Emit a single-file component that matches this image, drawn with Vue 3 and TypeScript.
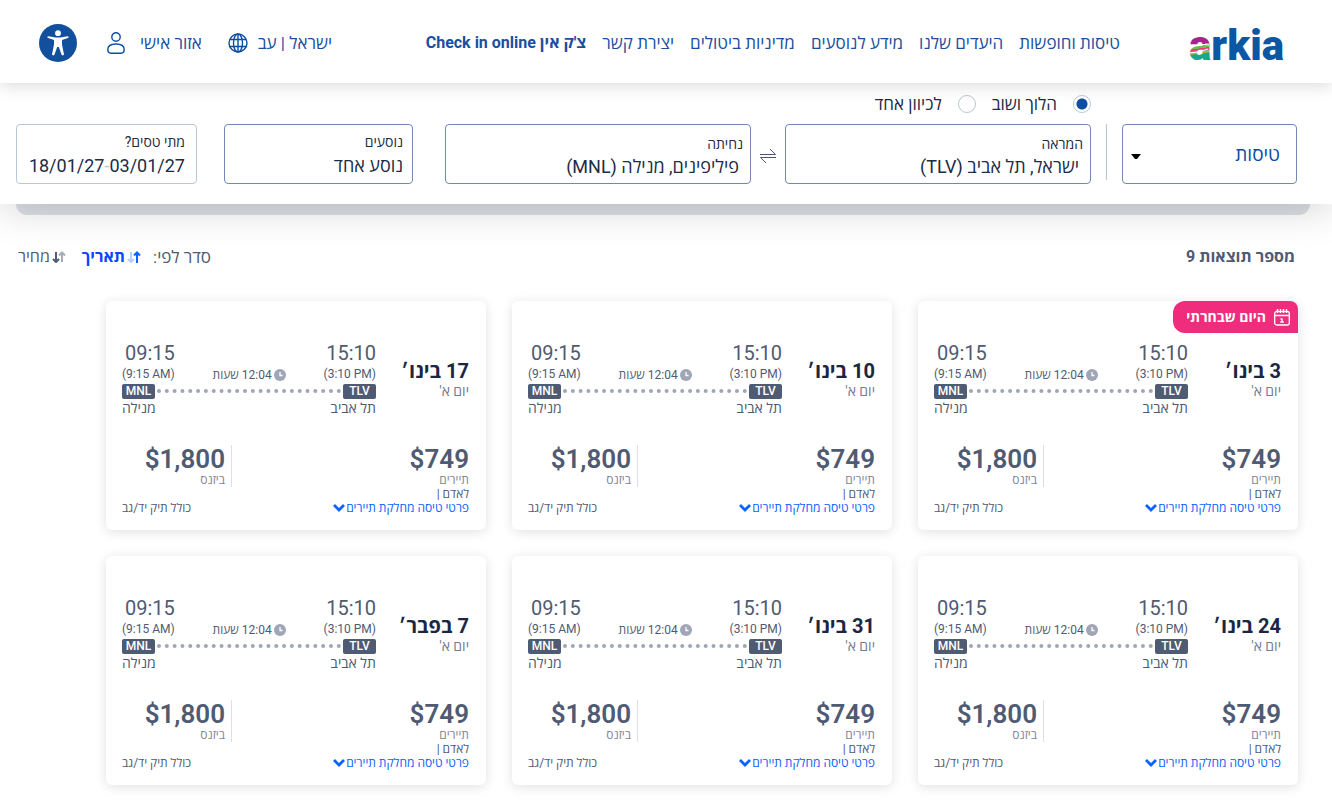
<script setup lang="ts">
import { ref } from 'vue'

interface Flight {
  id: number
  date: string
  chosen: boolean
}

const navItems: string[] = ['טיסות וחופשות', 'היעדים שלנו', 'מידע לנוסעים', 'מדיניות ביטולים', 'יצירת קשר']

const flights: Flight[] = [
  { id: 1, date: '3 בינו׳', chosen: true },
  { id: 2, date: '10 בינו׳', chosen: false },
  { id: 3, date: '17 בינו׳', chosen: false },
  { id: 4, date: '24 בינו׳', chosen: false },
  { id: 5, date: '31 בינו׳', chosen: false },
  { id: 6, date: '7 בפבר׳', chosen: false },
]

const trip = ref<'round' | 'oneway'>('round')
const origin = ref('ישראל, תל אביב (TLV)')
const destination = ref('פיליפינים, מנילה (MNL)')

function swap(): void {
  const previous = origin.value
  origin.value = destination.value
  destination.value = previous
}
</script>

<template>
  <div class="page" dir="rtl" lang="he">
    <header class="header">
      <a href="#" class="logo" aria-label="arkia">
        <svg width="96" height="60" viewBox="0 -7 96 60" direction="ltr">
          <defs>
            <linearGradient id="stripes" gradientUnits="userSpaceOnUse" x1="10" y1="16" x2="13" y2="39">
              <stop offset="0" stop-color="#f26a4b" />
              <stop offset=".1" stop-color="#f26a4b" />
              <stop offset=".1" stop-color="#a3268f" />
              <stop offset=".4" stop-color="#a3268f" />
              <stop offset=".4" stop-color="#6cbe45" />
              <stop offset=".58" stop-color="#6cbe45" />
              <stop offset=".58" stop-color="#ee3d7c" />
              <stop offset=".66" stop-color="#ee3d7c" />
              <stop offset=".68" stop-color="#35aee2" />
              <stop offset=".76" stop-color="#f5a623" />
              <stop offset=".84" stop-color="#14a88f" />
              <stop offset="1" stop-color="#14a88f" />
            </linearGradient>
          </defs>
          <text class="logo-text" x="1" y="41" fill="#0b57a4"><tspan fill="url(#stripes)">a</tspan>rkia</text>
          <path d="M1 29q10 -5 20 -3M0 34q10 0 20 -4" fill="none" stroke="#fff" />
        </svg>
      </a>
      <nav class="nav">
        <a v-for="item in navItems" :key="item" href="#">{{ item }}</a>
        <a href="#" class="checkin">צ'ק אין Check in online</a>
      </nav>
      <div class="tools">
        <a href="#" class="tool language">
          <span>ישראל | עב</span>
          <svg width="20" height="20" viewBox="0 0 20 20" fill="none" stroke="#0b4ea2" stroke-width="1.4">
            <circle cx="10" cy="10" r="9" />
            <ellipse cx="10" cy="10" rx="4.5" ry="9" />
            <path d="M10 1v18M2 6.5h16M2 13.5h16" />
          </svg>
        </a>
        <a href="#" class="tool account">
          <span>אזור אישי</span>
          <svg width="18" height="22" viewBox="0 0 18 22" fill="none" stroke="#0b4ea2" stroke-width="1.4">
            <circle cx="9" cy="5" r="4.2" />
            <path d="M9 12c-5 0-8.200 2.200-8.200 5.500 0 2.500 1.200 3.700 3.200 3.700h10c2 0 3.200-1.200 3.200-3.700C17.200 14.200 14 12 9 12z" />
          </svg>
        </a>
        <button type="button" class="access" aria-label="נגישות">
          <svg width="38" height="38" viewBox="0 0 38 38">
            <circle cx="19" cy="19" r="19" fill="#124f9c" />
            <circle cx="19" cy="9.200" r="2.900" fill="#fff" />
            <path d="M9.500 12.200l7 1.200h5l7-1.200c1.200-.1 1.500 1.500.4 1.900L23 16v4.500l1.900 9.500c.2 1.700-1.900 2-2.400.5L19.800 23h-1.600l-2.700 7.500c-.6 1.500-2.600 1.200-2.400-.5L15 20.500V16l-5.900-1.900c-1.100-.4-.800-2 .4-1.900z" fill="#fff" />
          </svg>
        </button>
      </div>
    </header>

    <form class="search" @submit.prevent>
      <div class="box product">
        <select aria-label="סוג מוצר">
          <option>טיסות</option>
        </select>
        <svg width="10" height="6" viewBox="0 0 10 6"><path d="M0 0h10L6 5H4z" fill="#000" /></svg>
      </div>
      <div class="divider"></div>
      <div class="trip">
        <div class="trip-kind">
          <label><input v-model="trip" type="radio" name="trip" value="round" />הלוך ושוב</label>
          <label><input v-model="trip" type="radio" name="trip" value="oneway" />לכיוון אחד</label>
        </div>
        <div class="places">
          <div class="box place">
            <label for="origin">המראה</label>
            <input id="origin" v-model="origin" type="text" />
          </div>
          <button type="button" class="swap" aria-label="החלפה" @click="swap">
            <svg width="16" height="16" viewBox="0 0 16 16" fill="none" stroke="#4c566e" stroke-width="1">
              <path d="M0 6.500h15.500L10 1M16 9.500H.5L6 15" />
            </svg>
          </button>
          <div class="box place">
            <label for="destination">נחיתה</label>
            <input id="destination" v-model="destination" type="text" />
          </div>
        </div>
      </div>
      <button type="button" class="box picker passengers">
        <span class="caption">נוסעים</span>
        <span class="value">נוסע אחד</span>
      </button>
      <button type="button" class="box picker dates">
        <span class="caption">מתי טסים?</span>
        <span class="value" dir="ltr">18/01/27<i>-</i>03/01/27</span>
      </button>
    </form>
    <div class="ledge"></div>

    <main>
      <div class="toolbar">
        <h1>מספר תוצאות 9</h1>
        <div class="sort">
          <span>סדר לפי:</span>
          <button type="button" class="active">
            <svg width="14" height="12" viewBox="0 0 14 12" fill="none" stroke-width="2">
              <path d="M10 12V2M7 4.500L10 1.500L13 4.500" stroke="#0a62ff" />
              <path d="M4 1v9M1 8L4 11L7 8" stroke="#b5d0ff" />
            </svg>
            תאריך
          </button>
          <button type="button">
            <svg width="14" height="12" viewBox="0 0 14 12" fill="none" stroke-width="2">
              <path d="M10 11V2M7 4.500L10 1.500L13 4.500" stroke="#a5abb9" />
              <path d="M4 1v9M1 8L4 11L7 8" stroke="#4f5a73" />
            </svg>
            מחיר
          </button>
        </div>
      </div>

      <section class="cards">
        <article v-for="flight in flights" :key="flight.id" class="card">
          <div v-if="flight.chosen" class="badge">
            <svg width="16" height="17" viewBox="0 0 16 17" fill="none" stroke="#fff" stroke-width="1.300">
              <rect x=".7" y="2.500" width="14.600" height="13.500" rx="2" />
              <path d="M1 6.500h14M3.500 0v4M6.500 0v4M9.500 0v4M12.500 0v4M6.500 10H8v3M6.200 13h3.600" />
            </svg>
            <span>היום שבחרתי</span>
          </div>
          <div class="flight">
            <div class="when">
              <h2>{{ flight.date }}</h2>
              <p>יום א'</p>
            </div>
            <div class="route">
              <div class="times">
                <div class="time"><strong>15:10</strong><small dir="ltr">(3:10 PM)</small></div>
                <div class="duration">
                  <svg width="12" height="12" viewBox="0 0 12 12">
                    <circle cx="6" cy="6" r="6" fill="#a0a6b6" />
                    <path d="M6 3v3.500h2.500" fill="none" stroke="#fff" stroke-width="1.300" />
                  </svg>
                  <span>12:04 שעות</span>
                </div>
                <div class="time"><strong>09:15</strong><small dir="ltr">(9:15 AM)</small></div>
              </div>
              <div class="line"><b>TLV</b><i></i><b>MNL</b></div>
              <div class="cities"><span>תל אביב</span><span>מנילה</span></div>
            </div>
          </div>
          <div class="prices">
            <div class="price"><strong dir="ltr">$749</strong><span>תיירים</span></div>
            <div class="price business"><strong dir="ltr">$1,800</strong><span>ביזנס</span></div>
          </div>
          <footer class="details">
            <div class="fare">
              <span>לאדם |</span>
              <a href="#">פרטי טיסה מחלקת תיירים<svg width="12" height="8" viewBox="0 0 12 8"><path d="M1 1L6 6L11 1" fill="none" stroke="#0a62ff" stroke-width="2.800" /></svg></a>
            </div>
            <span>כולל תיק יד/גב</span>
          </footer>
        </article>
      </section>
    </main>
  </div>
</template>

<style>
body {
  background: #fff;
}
</style>

<style scoped>
.page {
  font-family: Roboto, "Open Sans", "Noto Sans", sans-serif;
  font-size: 16px;
  line-height: 20px;
  color: #4f5a73;
}
.page * {
  box-sizing: border-box;
}
button,
input,
select {
  font: inherit;
  color: inherit;
  margin: 0;
  padding: 0;
  border: 0;
  background: none;
}
a {
  color: inherit;
  text-decoration: none;
}
svg {
  flex: none;
  display: block;
}
.header {
  position: relative;
  z-index: 3;
  display: flex;
  align-items: center;
  height: 83px;
  padding: 0 48px 0 39px;
  background: #fff;
  box-shadow: 0 2px 16px rgba(0, 0, 0, 0.16);
  color: #1a4f9f;
}
.logo-text {
  font-family: Roboto, sans-serif;
  font-size: 42px;
  line-height: 48px;
  font-weight: 900;
}
.nav {
  display: flex;
  gap: 16px;
  margin-right: 68px;
  white-space: nowrap;
  padding-top: 3px;
  font-size: 17px;
}
.checkin {
  font-size: 16px;
  font-weight: 700;
}
.tools {
  display: flex;
  align-items: center;
  margin-right: auto;
  padding-top: 3px;
  white-space: nowrap;
  font-size: 17px;
}
.tool {
  display: flex;
  align-items: center;
}
.language {
  gap: 10px;
}
.account {
  gap: 15px;
  margin: 0 26px 0 30px;
}
.search {
  position: relative;
  z-index: 2;
  display: flex;
  align-items: flex-end;
  padding: 12px 35px 20px 16px;
  background: #fff;
  box-shadow: 0 4px 40px rgba(0, 0, 0, 0.18);
  color: #202b45;
}
.box {
  height: 60px;
  border: 1px solid #7289b5;
  border-radius: 4px;
}
.product {
  display: flex;
  align-items: center;
  width: 175px;
  padding: 2px 16px 0 8px;
}
.product svg {
  margin-right: -10px;
  pointer-events: none;
  margin-top: 3px;
}
.product select {
  flex: 1;
  height: 56px;
  appearance: none;
  font-size: 19px;
  color: #0b4ea2;
  font-weight: 500;
}
.divider {
  width: 1px;
  height: 56px;
  margin: 0 15px 4px;
  background: #b8c4d2;
}
.trip {
  flex: 1;
  min-width: 0;
}
.trip-kind {
  display: flex;
  gap: 16px;
  height: 18px;
  margin-bottom: 11px;
  font-size: 17px;
}
.trip-kind label {
  display: flex;
  align-items: center;
  gap: 16px;
}
.trip-kind input {
  appearance: none;
  width: 18px;
  height: 18px;
  border: 1px solid #b8c8d4;
  border-radius: 50%;
}
.trip-kind input:checked {
  background: radial-gradient(circle, #0b4ea2 5px, #fff 6px);
}
.places {
  display: flex;
}
.place {
  flex: 1;
  min-width: 0;
  padding: 9px 7px 0;
}
.place label {
  display: block;
  font-size: 14px;
}
.place input {
  display: block;
  width: 100%;
  height: 24px;
  padding: 0 4px;
  font-size: 18px;
}
.swap {
  width: 34px;
  padding-top: 3px;
  display: grid;
  place-items: center;
}
.picker {
  display: flex;
  flex-direction: column;
  align-items: flex-start;
  padding: 7px 9px 0;
}
.passengers {
  width: 189px;
  margin: 0 32px 0 27px;
}
.dates {
  width: 181px;
  padding: 7px 11px 0;
  border-color: #b8c8d4;
}
.caption {
  font-size: 14px;
}
.value {
  font-size: 18px;
  line-height: 28px;
}
.value i {
  font-style: normal;
  color: #b8c4d2;
}
.ledge {
  height: 11px;
  margin: 0 22px 0 16px;
  border-radius: 0 0 14px 14px;
  background: #dcdfe5;
}
.toolbar {
  display: flex;
  justify-content: space-between;
  align-items: center;
  padding: 32px 37px 34px 18px;
}
.toolbar h1 {
  margin: 0;
  font-size: 16px;
  font-weight: 700;
}
.sort {
  display: flex;
  gap: 12px;
}
.sort span {
  font-size: 17px;
}
.sort button {
  display: flex;
  align-items: center;
  gap: 2px;
}
.sort .active {
  color: #0a45ff;
  font-weight: 700;
}
.sort .active + button {
  margin-right: 4px;
}
.cards {
  display: grid;
  grid-template-columns: repeat(3, minmax(0, 1fr));
  gap: 26px;
  padding: 0 34px 16px 106px;
}
.card {
  position: relative;
  padding: 40px 17px 15px 16px;
  border-radius: 6px;
  background: #fff;
  box-shadow: 0 2px 12px rgba(0, 0, 0, 0.12);
}
.badge {
  position: absolute;
  top: 0;
  right: 0;
  display: flex;
  align-items: center;
  gap: 8px;
  width: 125px;
  height: 32px;
  padding: 0 8px;
  border-radius: 12px 8px 0 12px;
  background: #f02d7d;
  color: #fff;
  font-size: 14px;
  font-weight: 700;
  white-space: nowrap;
}
.flight {
  display: flex;
  justify-content: space-between;
  align-items: center;
}
.when h2 {
  margin: 0;
  font-size: 20px;
  line-height: 24px;
  color: #1b2742;
}
.when p {
  margin: 0;
  font-size: 14px;
  line-height: 16px;
  color: #727b90;
}
.route {
  width: 254px;
}
.times,
.cities {
  display: flex;
  justify-content: space-between;
}
.time {
  display: flex;
  flex-direction: column;
}
.time strong {
  font-size: 20px;
  line-height: 24px;
  font-weight: 400;
}
.time small {
  font-size: 12px;
  line-height: 18px;
  text-align: right;
}
.duration {
  display: flex;
  align-items: center;
  align-self: flex-end;
  gap: 2px;
  font-size: 12px;
  line-height: 16px;
}
.line {
  display: flex;
  align-items: center;
  margin-top: 1px;
}
.line b {
  width: 33px;
  border-radius: 2px;
  background: #4f5a73;
  color: #fff;
  font-size: 12px;
  line-height: 15px;
  font-weight: 500;
  text-align: center;
}
.line i {
  flex: 1;
  margin: 0 2px 1px;
  border-top: 4px dotted #a0a6b6;
}
.cities {
  font-size: 14px;
  line-height: 18px;
}
.prices {
  display: flex;
  justify-content: space-between;
  align-items: flex-start;
  margin-top: 28px;
}
.price strong {
  display: block;
  font-size: 26px;
  line-height: 28px;
  font-weight: 600;
}
.price span {
  display: block;
  font-size: 12px;
  line-height: 14px;
  color: #7d8598;
}
.business {
  width: 110px;
  padding-right: 6px;
  border-right: 1px solid #dcdfe5;
}
.business strong,
.business span {
  text-align: right;
}
.details {
  display: flex;
  justify-content: space-between;
  align-items: flex-end;
  font-size: 12px;
  line-height: 14px;
}
.fare span {
  display: block;
}
.fare a {
  display: flex;
  align-items: center;
  gap: 1px;
  color: #0a62ff;
}
</style>
